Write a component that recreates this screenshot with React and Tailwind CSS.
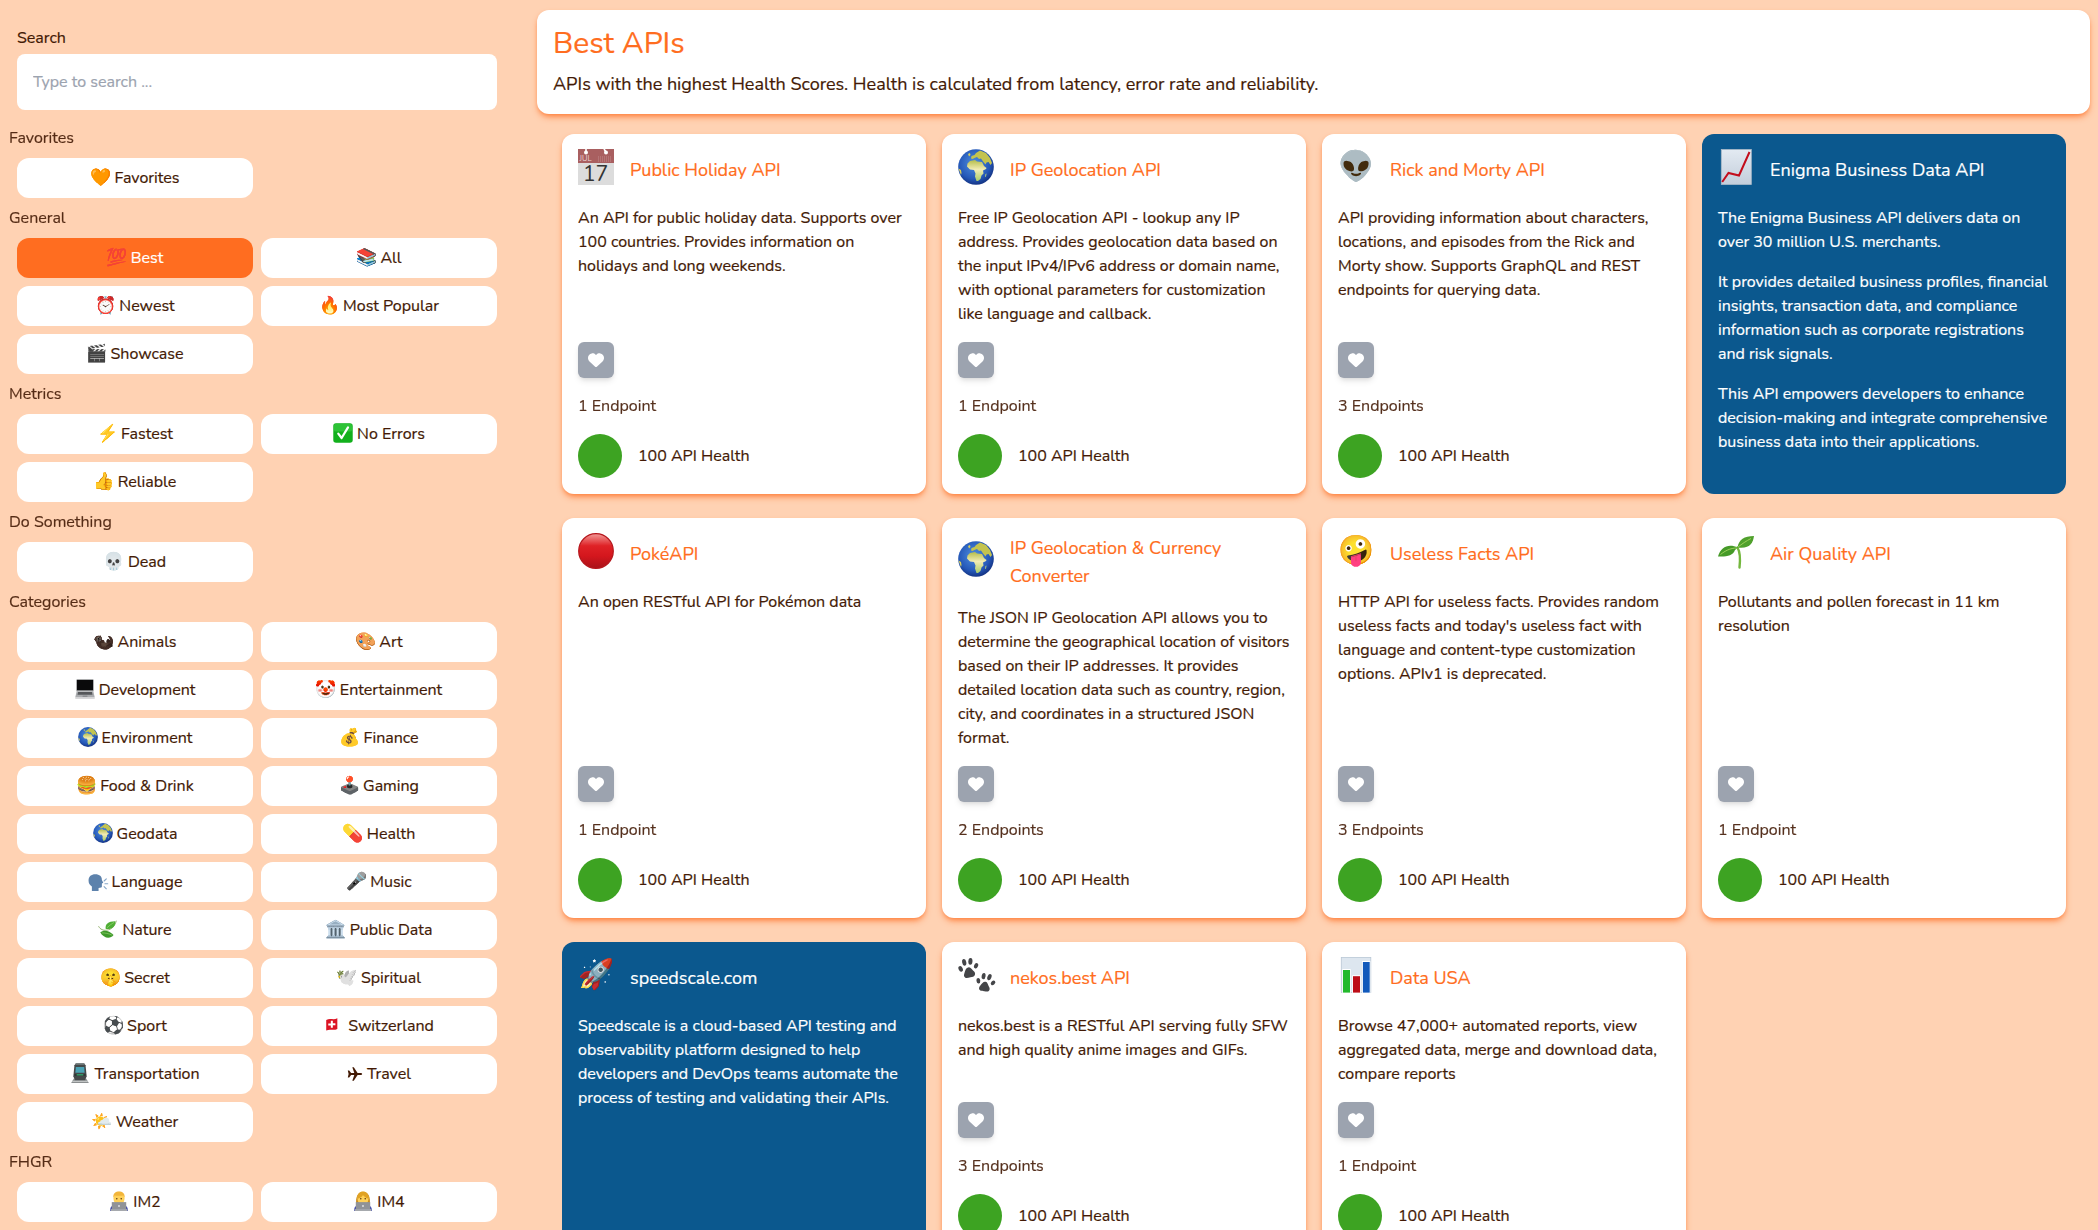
import React from "react";

const svgProps = { viewBox: "0 0 36 36", className: "block h-full w-full overflow-visible" };

const Globe = () => (
  <svg {...svgProps}>
    <defs>
      <radialGradient id="sea" cx="0.45" cy="0.4" r="0.62">
        <stop offset="0" stopColor="#4f8fe0" />
        <stop offset="0.7" stopColor="#2558b8" />
        <stop offset="1" stopColor="#12307f" />
      </radialGradient>
      <linearGradient id="land" x1="0" y1="0" x2="0" y2="1">
        <stop offset="0" stopColor="#b5bd4a" />
        <stop offset="0.45" stopColor="#f2ecb4" />
        <stop offset="1" stopColor="#a9cc68" />
      </linearGradient>
    </defs>
    <circle cx="18" cy="18" r="17.8" fill="url(#sea)" />
    <path fill="url(#land)" d="M9.500 14.500 12 12l5-1 2 1.500 5 .5 2 4 2.500 2-.5 1-3 1.500.5 3-2 2-1 3.500-2.500 2h-1.500L17 27.500l.500-3-1.500-3.500-4-.5-3-3z" />
    <path fill="#c3c34f" d="M13 9.500l.5-2.500 3-1 1.500-2L22 1.500l6 2.500 4 5 2 5-1.500 2-2-3-2 .500-1 2-2.500-3-2-3-2 .5-2-2-2.500 1-2 1z" />
    <path fill="#d9cf5a" d="M.5 19.500 3 21l.5 3-.5 2zM10 5l2-1 .5 2-1.500 1.500z" />
    <path fill="#b8cf7a" d="M27.500 25l1-.5-.5 3-1 .5z" />
  </svg>
);

const Calendar = () => (
  <svg {...svgProps}>
    <rect y="0" width="36" height="36" fill="#dcdcdc" />
    <rect width="36" height="14" fill="#a95f60" />
    <path stroke="#c08a8b" strokeWidth="1" strokeDasharray="1 1" d="M20 8h14M20 10h14M20 12h14" />
    <circle cx="8" cy="3.500" r="2" fill="#fff" />
    <circle cx="28" cy="3.500" r="2" fill="#fff" />
    <path stroke="#fff" strokeWidth="1.600" d="M8 3V0M28 3l-2-3" />
    <text x="1.500" y="12.200" fontFamily="Nunito, sans-serif" fontSize="7.500" fill="#ecd6d6">JUL</text>
    <text x="17.600" y="31.800" textAnchor="middle" fontFamily="Nunito, sans-serif" fontSize="21.500" fill="#333">17</text>
  </svg>
);

const Rising = () => (
  <svg {...svgProps}>
    <defs>
      <linearGradient id="sheet" x1="0" y1="0" x2="0" y2="1">
        <stop offset="0" stopColor="#e3eaf2" />
        <stop offset="1" stopColor="#c3cedb" />
      </linearGradient>
    </defs>
    <rect x="3.300" y="0.500" width="30" height="35" fill="url(#sheet)" stroke="#aab9c8" strokeWidth="0.800" />
    <path fill="none" stroke="#c30d1c" strokeWidth="2" d="M4.200 33 10.500 24 21 26.500 31.500 3" />
  </svg>
);

const RedBall = () => (
  <svg {...svgProps}>
    <defs>
      <linearGradient id="ball" x1="0" y1="0" x2="0" y2="1">
        <stop offset="0" stopColor="#f29a98" />
        <stop offset="0.35" stopColor="#df2226" />
        <stop offset="0.65" stopColor="#d4161d" />
        <stop offset="1" stopColor="#a91219" />
      </linearGradient>
    </defs>
    <circle cx="18" cy="18" r="17.300" fill="url(#ball)" stroke="#b5161c" strokeWidth="1.200" />
  </svg>
);

const Paw = ({ t }) => (
  <g transform={t} fill="#444548">
    <path d="M9.500 9c2 0 2.600 1.800 4 3.400 1.500 1.600 2 2.600 1.300 4.200-.8 1.600-2.500 1.500-4.300 1.600-1.800.2-3.700 1-5-.2-1.300-1.200-.8-2.800 0-4.500C6.400 11.400 7.300 9 9.500 9z" />
    <ellipse cx="2.300" cy="9.600" rx="1.900" ry="2.700" transform="rotate(-20 2.300 9.600)" />
    <ellipse cx="6.200" cy="4" rx="1.900" ry="3.100" transform="rotate(-5 6.200 4)" />
    <ellipse cx="12" cy="3.600" rx="1.900" ry="3.100" transform="rotate(10 12 3.600)" />
    <ellipse cx="16.800" cy="8.200" rx="1.800" ry="2.600" transform="rotate(30 16.800 8.200)" />
  </g>
);

const Paws = () => (
  <svg {...svgProps}>
    <Paw t="translate(0 0.800) rotate(-6 9 9) scale(1.080)" />
    <Paw t="translate(18 15.500) rotate(14 9 9) scale(1.020)" />
  </svg>
);

const Bars = () => (
  <svg {...svgProps}>
    <rect x="3.300" y="0.500" width="29.500" height="35" fill="#dde6ef" stroke="#b9c7d5" strokeWidth="0.800" />
    <rect x="4.300" y="12" width="8.400" height="24" fill="#fff" />
    <rect x="14.200" y="18.200" width="8.400" height="18" fill="#fff" />
    <rect x="24" y="4" width="8.400" height="32" fill="#fff" />
    <rect x="5" y="13" width="7" height="22.600" fill="#22b92c" />
    <rect x="15" y="19.200" width="7" height="16.400" fill="#bd0d17" />
    <rect x="24.900" y="5" width="6.800" height="30.600" fill="#1159bb" />
  </svg>
);

const Seedling = () => (
  <svg {...svgProps}>
    <path fill="none" stroke="#74b73e" strokeWidth="2.400" strokeLinecap="round" d="M21.500 34.500c.8-7 1.500-14-2-20" />
    <path fill="#4fa02c" d="M19.500 14.500C21 6 26 3.500 36 3c-1 7-4 13-16.500 11.500z" />
    <path fill="#459a28" d="M20 14.500C11 10.500 3 13 0 23.500c8 .5 15-.5 17-6.500z" />
    <path fill="none" stroke="#9bd05a" strokeWidth="1" d="M20 14c4-3 8-6 13-8.500M19 15C12 15 7 18 2.500 21.500" />
  </svg>
);

const Leaves = () => (
  <svg {...svgProps}>
    <path fill="none" stroke="#7a9f4c" strokeWidth="1.400" d="M1 13c3 6 9 8 15 7 8-1 14-6 17-17" />
    <path fill="#4fae35" d="M14 18C12 10 18 4 31 4c1 8-4 15-17 14z" />
    <path fill="#3f9a2b" d="M4 24c6-5 16-4 24 5-6 8-18 6-24-5z" />
    <path fill="none" stroke="#a7dc7c" strokeWidth="1" d="M16 16c4-4 8-7 13-10M7 25c6 0 12 1 18 4" />
  </svg>
);

const Laptop = () => (
  <svg {...svgProps}>
    <path fill="#8e9093" d="M2.500 1h31v21h-31z" />
    <path fill="#0a0a0b" d="M3.500 1.500h29V20h-29z" />
    <path fill="#a9abae" d="M3 22h30l2.500 11h-35z" />
    <path fill="#56585b" d="M5.500 23.500h25l1 5h-27z" />
    <path fill="#8b8d90" d="M14 29.500h8l.5 3h-9z" />
    <path fill="#c9cacc" d="M.5 33h35v2.500H.5z" />
  </svg>
);

const Train = () => (
  <svg {...svgProps}>
    <path fill="#8b8f90" d="M7 28h22l5 8H2z" />
    <path fill="#44494a" d="M8 4 10.500 1h15L28 4l2 20-3 7H9l-3-7z" />
    <path fill="#7a8283" d="M10.500 0h15l1 3h-17z" />
    <path fill="#4ba3b5" d="M10.500 7h15l.8 10.500H9.700z" />
    <path fill="#2f3435" d="M8 20h20v3H8z" />
    <path fill="#35a36b" d="M12 20h12v2.500H12z" />
    <path stroke="#c8cccc" strokeWidth="2" d="M4 33h28" />
  </svg>
);

const Coder = ({ long }) => (
  <svg {...svgProps}>
    <path fill="#3a45ad" d="M2 36c0-7 2.500-10 8-11h16c5.500 1 8 4 8 11z" />
    {long && <path fill="#c98a1b" d="M6 26C4 12 8 2 18 2s14 9 12 24z" />}
    <ellipse cx="18" cy="13.500" rx="10" ry="12" fill="#ffd159" />
    <path fill={long ? "#e0a224" : "#f2b53a"} d={long ? "M8 14C7 5 12 1 18 1s11 4 10 13C24 13 20 10 18 7c-2 4-6 6-10 7z" : "M8 12C7 4 12 1 18 1s11 3 10 11l-2-4c-5 1-11 1-16 0z"} />
    <circle cx="14" cy="14" r="1.400" fill="#5c3a12" />
    <circle cx="22" cy="14" r="1.400" fill="#5c3a12" />
    <path fill="#909398" d="M5 20h26v13H5z" />
    <path fill="#a6a9ad" d="M3 32.500h30V36H3z" />
    <circle cx="18" cy="27" r="1.600" fill="#e8e9ea" />
  </svg>
);

const Check = () => (
  <svg {...svgProps}>
    <rect x="0.500" y="0.500" width="35" height="35" rx="5" fill="#12b01c" />
    <rect x="1.500" y="1.500" width="33" height="14" rx="4" fill="#3fd148" opacity="0.6" />
    <path fill="none" stroke="#fff" strokeWidth="4" strokeLinecap="round" strokeLinejoin="round" d="m9.500 19 6 8L27 8" />
  </svg>
);

const Swiss = () => (
  <svg {...svgProps}>
    <path fill="#dc1424" d="M4 9c7-4 13 1 20-3v19c-7 4-13-1-20 3z" />
    <path fill="#fff" d="M12.300 10.500h3.600v4.400h4.600v3.700h-4.600v4.400h-3.600v-4.200H7.700v-3.700h4.600z" />
  </svg>
);

const Speaking = () => (
  <svg {...svgProps}>
    <path fill="#5d82ac" d="M7 36v-8C3 25 1 22 1 17 1 10 6 6 13 6c8 0 12 4 12 10l2.500 5-2.500 1.500V28c0 2-2 2.500-6 2.500V36z" />
    <path stroke="#86a6c8" strokeWidth="2" strokeLinecap="round" d="m29 18 4-4M30.500 23h5M29 28l4 4" />
  </svg>
);

const Plane = () => (
  <svg viewBox="0 0 16 16" className="block h-full w-full" fill="#431a05">
    <path d="M.8 4.600h1.400L4.100 7h3.200L5.300 1.200h1.500L10.600 7h2.600c1.300 0 2 .5 2 1s-.7 1-2 1h-2.600l-3.800 5.800H5.300L7.300 9H4.100l-1.900 2.400H.8L1.600 8z" />
  </svg>
);

const sections = [
  ["Favorites", [["🧡", "Favorites"]]],
  ["General", [["💯", "Best", true], ["📚", "All"], ["⏰", "Newest"], ["🔥", "Most Popular"], ["🎬", "Showcase"]]],
  ["Metrics", [["⚡", "Fastest"], [<Check />, "No Errors"], ["👍", "Reliable"]]],
  ["Do Something", [["💀", "Dead"]]],
  ["Categories", [
    ["🦦", "Animals"], ["🎨", "Art"],
    [<Laptop />, "Development"], ["🤡", "Entertainment"],
    [<Globe />, "Environment"], ["💰", "Finance"],
    ["🍔", "Food & Drink"], ["🕹️", "Gaming"],
    [<Globe />, "Geodata"], ["💊", "Health"],
    [<Speaking />, "Language"], ["🎤", "Music"],
    [<Leaves />, "Nature"], ["🏛️", "Public Data"],
    ["🤫", "Secret"], ["🕊️", "Spiritual"],
    ["⚽", "Sport"], [<Swiss />, "Switzerland"],
    [<Train />, "Transportation"], [<Plane />, "Travel"],
    ["🌤️", "Weather"],
  ]],
  ["FHGR", [[<Coder />, "IM2"], [<Coder long />, "IM4"]]],
];

const cards = [
  { icon: <Calendar />, title: "Public Holiday API", text: ["An API for public holiday data. Supports over 100 countries. Provides information on holidays and long weekends."], n: 1 },
  { icon: <Globe />, title: "IP Geolocation API", text: ["Free IP Geolocation API - lookup any IP address. Provides geolocation data based on the input IPv4/IPv6 address or domain name, with optional parameters for customization like language and callback."], n: 1 },
  { icon: "👽", title: "Rick and Morty API", text: ["API providing information about characters, locations, and episodes from the Rick and Morty show. Supports GraphQL and REST endpoints for querying data."], n: 3 },
  { icon: <Rising />, title: "Enigma Business Data API", text: ["The Enigma Business API delivers data on over 30 million U.S. merchants.", "It provides detailed business profiles, financial insights, transaction data, and compliance information such as corporate registrations and risk signals.", "This API empowers developers to enhance decision-making and integrate comprehensive business data into their applications."], ad: true },
  { icon: <RedBall />, title: "PokéAPI", text: ["An open RESTful API for Pokémon data"], n: 1 },
  { icon: <Globe />, title: "IP Geolocation & Currency Converter", text: ["The JSON IP Geolocation API allows you to determine the geographical location of visitors based on their IP addresses. It provides detailed location data such as country, region, city, and coordinates in a structured JSON format."], n: 2 },
  { icon: "🤪", title: "Useless Facts API", text: ["HTTP API for useless facts. Provides random useless facts and today's useless fact with language and content-type customization options. APIv1 is deprecated."], n: 3 },
  { icon: <Seedling />, title: "Air Quality API", text: ["Pollutants and pollen forecast in 11 km resolution"], n: 1 },
  { icon: "🚀", title: "speedscale.com", text: ["Speedscale is a cloud-based API testing and observability platform designed to help developers and DevOps teams automate the process of testing and validating their APIs."], ad: true },
  { icon: <Paws />, title: "nekos.best API", text: ["nekos.best is a RESTful API serving fully SFW and high quality anime images and GIFs."], n: 3 },
  { icon: <Bars />, title: "Data USA", text: ["Browse 47,000+ automated reports, view aggregated data, merge and download data, compare reports"], n: 1 },
];

function NavIcon({ icon, small, dark }) {
  if (typeof icon === "string")
    return (
      <span className={"flex w-5 justify-center text-[17px] leading-6 " + (dark ? "brightness-50" : "")}>{icon}</span>
    );
  return <span className={small ? "h-4 w-4" : "mb-0.5 h-5 w-5"}>{icon}</span>;
}

function NavButton({ icon, label, active }) {
  return (
    <button
      className={
        "flex h-10 items-center justify-center gap-1 rounded-xl leading-6 whitespace-nowrap " +
        (active ? "bg-[#ff6d20] text-white" : "bg-white")
      }
    >
      <NavIcon icon={icon} small={label === "Travel"} dark={label === "Animals"} />
      {label}
    </button>
  );
}

function Card({ icon, title, text, n, ad }) {
  return (
    <article
      className={
        "flex flex-col gap-4 rounded-xl p-4 " +
        (ad ? "bg-[#0b588e] text-white" : "bg-white shadow-md shadow-[#ff6d20]/65")
      }
    >
      <header className="flex min-h-10 items-center gap-4">
        <span className="-mt-px mb-[5px] flex h-9 w-9 shrink-0 items-center justify-center text-[29px] leading-9">{icon}</span>
        <h2 className={"text-lg leading-7 " + (ad ? "" : "text-[#ff6d20]")}>{title}</h2>
      </header>
      <div className="flex flex-1 flex-col gap-4">
        {text.map((p) => (
          <p key={p}>{p}</p>
        ))}
      </div>
      {!ad && (
        <>
          <button className="flex h-9 w-9 items-center justify-center rounded-md bg-[#9ca3af] shadow-md">
            <svg viewBox="0 0 512 512" className="h-4 w-4" fill="#fff">
              <path d="M47.600 300.400 228.300 469.100c7.500 7 17.400 10.900 27.700 10.900s20.200-3.900 27.700-10.900L464.400 300.400c30.400-28.300 47.600-68 47.600-109.500v-5.800c0-69.900-50.500-129.500-119.400-141C347 36.500 300.600 51.400 268 84l-12 12-12-12c-32.600-32.600-79-47.500-124.600-39.900C50.500 55.600 0 115.200 0 185.100v5.800c0 41.500 17.200 81.200 47.600 109.500z" />
            </svg>
          </button>
          <p className="opacity-90">{n} {n === 1 ? "Endpoint" : "Endpoints"}</p>
          <div className="flex items-center gap-4">
            <span className="h-11 w-11 rounded-full bg-[#3da322]" />
            <span>100 API Health</span>
          </div>
        </>
      )}
    </article>
  );
}

export default function App() {
  return (
    <div className="flex h-[1230px] overflow-hidden bg-[#ffd2b3] font-['Nunito',sans-serif] text-base text-[#431a05] [-webkit-text-stroke:0.2px]">
      <aside className="w-[524px] shrink-0 pt-[26px] pr-[27px] pl-[17px]">
        <label className="block">Search</label>
        <input
          placeholder="Type to search ..."
          className="mt-1 mb-4 block h-14 w-full rounded-lg bg-white px-4 placeholder:text-[#9ca3af]"
        />
        {sections.map(([name, items]) => (
          <section key={name} className="mb-2">
            <h3 className="-ml-2 opacity-90">{name}</h3>
            <div className="mt-2 grid grid-cols-2 gap-2">
              {items.map(([icon, label, active]) => (
                <NavButton key={label} icon={icon} label={label} active={active} />
              ))}
            </div>
          </section>
        ))}
      </aside>
      <main className="flex-1 pt-2.5 pr-2 pl-[13px]">
        <header className="h-26 rounded-xl bg-white px-4 pt-4 shadow-md shadow-[#ff6d20]/65">
          <h1 className="text-3xl text-[#ff6d20]">Best APIs</h1>
          <p className="mt-2 text-lg leading-7">
            APIs with the highest Health Scores. Health is calculated from latency, error rate and reliability.
          </p>
        </header>
        <div className="mt-5 grid grid-cols-4 gap-x-4 gap-y-6 pr-6 pl-[25px]">
          {cards.map((c) => (
            <Card key={c.title} {...c} />
          ))}
        </div>
      </main>
    </div>
  );
}
